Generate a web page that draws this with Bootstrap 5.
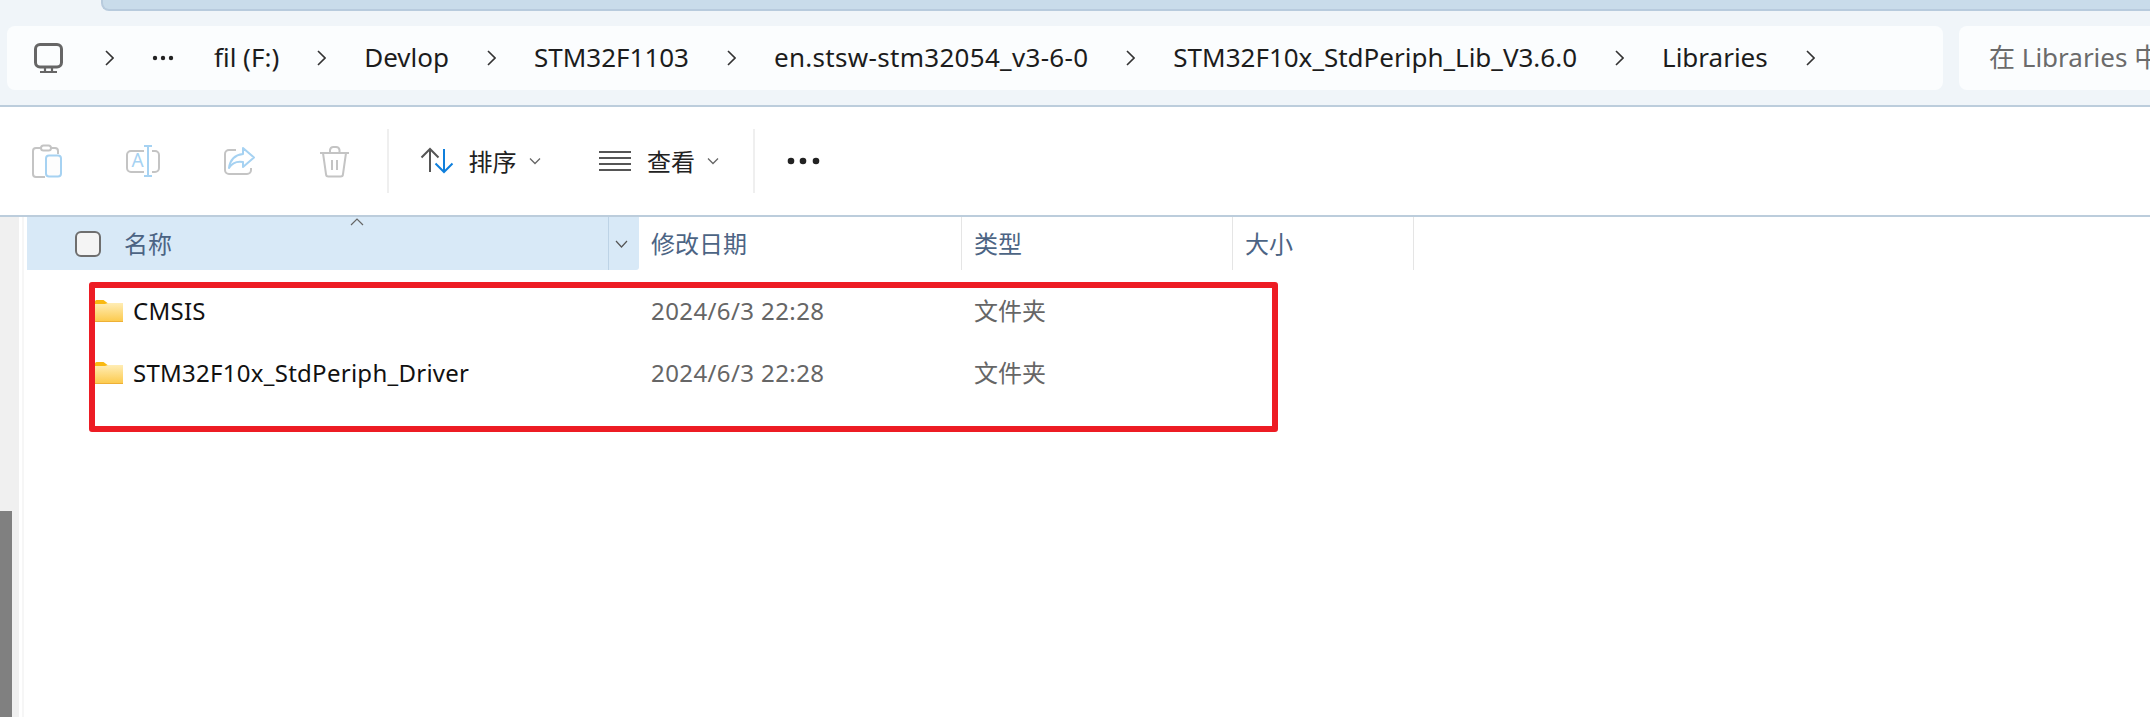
<!DOCTYPE html>
<html lang="zh">
<head>
<meta charset="utf-8">
<title>Libraries</title>
<link href="https://cdn.jsdelivr.net/npm/bootstrap@5.3.0/dist/css/bootstrap.min.css" rel="stylesheet">
<style>
html,body{height:100%;overflow:hidden;background:#fff}
body{font-family:"Noto Sans","Noto Sans CJK SC",sans-serif;font-size:24px;line-height:1.3;color:#1c1c1c}
svg{display:block;flex:none}
.ex-top{height:107px;background:#f0f5f9;border-bottom:2px solid #bccddc;position:relative}
.ex-tab{height:11px;margin-left:101px;background:#c9dcea;border-bottom:2px solid #b8cbdd;border-left:2px solid #b8cbdd;border-bottom-left-radius:8px}
.ex-bars{margin:15px 0 0 7px;height:64px;gap:16px;font-size:26px}
.ex-crumbs{width:1936px;background:#fbfdfe;border-radius:8px;padding-left:27px;gap:38px}
.ex-search{flex:1;background:#fbfdfe;border-radius:8px 0 0 8px;padding-left:30px;color:#6b6b6b;white-space:nowrap;overflow:hidden}
.ex-mon{margin-right:4px}
.ex-dots{margin-right:2px}
.ex-long{letter-spacing:.3px}
.ex-tools{height:110px;border-bottom:2px solid #bccddc}
.ex-main{height:500px}
.ex-side{width:19px;background:#f0f0f0}
.ex-thumb{width:12px;height:206px;background:#808080}
.ex-gut{width:5px;border-right:2px solid #f6f6f6;margin-right:3px}
.ex-list{flex:1;position:relative}
.ex-head{height:53px;color:#4c6484}
.ex-cname{width:581px}
.ex-cdrop{width:31px}
.ex-cdate{width:323px}
.ex-ctype{width:271px}
.ex-csize{width:181px}
.ex-hname{background:#d8e9f7;padding-left:48px;position:relative}
.ex-hdrop{background:#d8e9f7;border-left:1px solid #bdd3e6;border-radius:0 0 3px 0;padding-left:6px}
.ex-hcol{border-right:1px solid #e5e5e5;padding-left:12px}
.ex-caret{position:absolute;left:323px;top:1px}
.ex-check{width:26px;height:26px;border:2px solid #6e6e6e;border-radius:6px;background:#f4f4f4;margin-right:23px}
.ex-rows{padding-top:10px}
.ex-row{height:62px}
.ex-file{padding-left:68px;gap:10px;color:#111;letter-spacing:.27px}
.ex-meta{padding-left:12px;color:#666}
.ex-when{letter-spacing:.4px}
.ex-mark{position:absolute;left:62px;top:65px;width:1189px;height:150px;border:6px solid #ed1c24;border-radius:3px}
</style>
</head>
<body>
<svg width="0" height="0" class="position-absolute"><defs><linearGradient id="fg" x1="0" y1="0" x2="0" y2="1"><stop offset="0" stop-color="#ffedb5"/><stop offset="1" stop-color="#fcc94a"/></linearGradient></defs></svg>
<div class="ex-top">
  <div class="ex-tab"></div>
  <div class="ex-bars d-flex">
    <div class="ex-crumbs d-flex align-items-center">
      <svg class="ex-mon" width="29" height="30" viewBox="0 0 29 30"><rect x="1.5" y="1.5" width="26" height="22.5" rx="4.5" fill="none" stroke="#666" stroke-width="3"/><path d="M11 25v3M18 25v3M6 29h17" stroke="#666" stroke-width="2.2" fill="none"/></svg>
      <svg width="9" height="16" viewBox="0 0 9 16"><path d="M1 1l7 7-7 7" fill="none" stroke="#333" stroke-width="1.6"/></svg>
      <svg class="ex-dots" width="22" height="6" viewBox="0 0 22 6"><circle cx="3" cy="3" r="2.2" fill="#222"/><circle cx="11" cy="3" r="2.2" fill="#222"/><circle cx="19" cy="3" r="2.2" fill="#222"/></svg>
      <span>fil (F:)</span>
      <svg width="9" height="16" viewBox="0 0 9 16"><path d="M1 1l7 7-7 7" fill="none" stroke="#333" stroke-width="1.6"/></svg>
      <span>Devlop</span>
      <svg width="9" height="16" viewBox="0 0 9 16"><path d="M1 1l7 7-7 7" fill="none" stroke="#333" stroke-width="1.6"/></svg>
      <span>STM32F1103</span>
      <svg width="9" height="16" viewBox="0 0 9 16"><path d="M1 1l7 7-7 7" fill="none" stroke="#333" stroke-width="1.6"/></svg>
      <span class="ex-long">en.stsw-stm32054_v3-6-0</span>
      <svg width="9" height="16" viewBox="0 0 9 16"><path d="M1 1l7 7-7 7" fill="none" stroke="#333" stroke-width="1.6"/></svg>
      <span>STM32F10x_StdPeriph_Lib_V3.6.0</span>
      <svg width="9" height="16" viewBox="0 0 9 16"><path d="M1 1l7 7-7 7" fill="none" stroke="#333" stroke-width="1.6"/></svg>
      <span>Libraries</span>
      <svg width="9" height="16" viewBox="0 0 9 16"><path d="M1 1l7 7-7 7" fill="none" stroke="#333" stroke-width="1.6"/></svg>
    </div>
    <div class="ex-search d-flex align-items-center">在 Libraries 中搜索</div>
  </div>
</div>

<div class="ex-tools d-flex align-items-center">
  <svg width="2150" height="108" viewBox="0 107 2150 108">
    <path d="M42 148h-6a3 3 0 0 0-3 3v23a3 3 0 0 0 3 3h9M50 148h5a3 3 0 0 1 3 3v3" fill="none" stroke="#c4c4c4" stroke-width="2"/>
    <rect x="41" y="145.500" width="10" height="5" rx="2.500" fill="none" stroke="#c4c4c4" stroke-width="2"/>
    <rect x="46" y="155.500" width="15" height="21" rx="3" fill="#fdfdfd" stroke="#a6d2f2" stroke-width="2"/>
    <path d="M144 151h-13a4 4 0 0 0-4 4v13a4 4 0 0 0 4 4h13M152 151h3a4 4 0 0 1 4 4v13a4 4 0 0 1-4 4h-3" fill="none" stroke="#c4c4c4" stroke-width="2"/>
    <path d="M148 146v30M144 146h8M144 176h8" fill="none" stroke="#a6d2f2" stroke-width="2"/>
    <text x="131.500" y="167" font-family="Noto Sans" font-size="19" fill="#a6d2f2">A</text>
    <path d="M236 150h-7a4 4 0 0 0-4 4v16a4 4 0 0 0 4 4h18a4 4 0 0 0 4-4v-2" fill="none" stroke="#c4c4c4" stroke-width="2"/>
    <path d="M243 148l11 9.500-11 9.500v-5c-6-1-11 1-14 6 1-8 6-13 14-14z" fill="#fff" stroke="#a6d2f2" stroke-width="2" stroke-linejoin="round"/>
    <path d="M320 153h29M323 153l3 21a2.500 2.500 0 0 0 2.500 2.500h12a2.500 2.500 0 0 0 2.500-2.500l3-21M330 153v-3a3.500 3.500 0 0 1 3.500-3h2.500a3.500 3.500 0 0 1 3.500 3v3M332 160v10M337 160v10" fill="none" stroke="#c4c4c4" stroke-width="2"/>
    <rect x="387" y="129" width="2" height="64" fill="#efefef"/>
    <path d="M430 172v-23M421.500 157.500l8.500-8.500 8.500 8.500" fill="none" stroke="#555" stroke-width="2"/>
    <path d="M444 149v23M435.500 163.500l8.500 8.500 8.500-8.500" fill="none" stroke="#0f7fdc" stroke-width="2"/>
    <path d="M530 158.500l5 5 5-5" fill="none" stroke="#666" stroke-width="1.300"/>
    <path d="M599 152h32M599 158h32M599 164h32M599 170h32" fill="none" stroke="#555" stroke-width="2"/>
    <path d="M708 158.500l5 5 5-5" fill="none" stroke="#666" stroke-width="1.300"/>
    <rect x="753" y="129" width="2" height="64" fill="#efefef"/>
    <circle cx="791" cy="161" r="3.300" fill="#222"/><circle cx="803" cy="161" r="3.300" fill="#222"/><circle cx="816" cy="161" r="3.300" fill="#222"/>
    <text x="468.500" y="171" font-family="Noto Sans CJK SC" font-size="24" fill="#222">排序</text>
    <text x="647" y="171" font-family="Noto Sans CJK SC" font-size="24" fill="#222">查看</text>
  </svg>
</div>

<div class="ex-main d-flex">
  <div class="ex-side d-flex flex-column justify-content-end"><div class="ex-thumb"></div></div>
  <div class="ex-gut"></div>
  <div class="ex-list">
    <div class="ex-head d-flex">
      <div class="ex-cname ex-hname d-flex align-items-center">
        <svg class="ex-caret" width="14" height="8" viewBox="0 0 14 8"><path d="M1 7l6-6 6 6" fill="none" stroke="#666" stroke-width="1.200"/></svg>
        <span class="ex-check d-block"></span><span>名称</span>
      </div>
      <div class="ex-cdrop ex-hdrop d-flex align-items-center"><svg width="13" height="8" viewBox="0 0 13 8"><path d="M1 1l5.500 6 5.500-6" fill="none" stroke="#555" stroke-width="1.200"/></svg></div>
      <div class="ex-cdate ex-hcol d-flex align-items-center">修改日期</div>
      <div class="ex-ctype ex-hcol d-flex align-items-center">类型</div>
      <div class="ex-csize ex-hcol d-flex align-items-center">大小</div>
    </div>
    <div class="ex-rows">
      <div class="ex-row d-flex align-items-center">
        <div class="ex-cname ex-file d-flex align-items-center">
          <svg width="28" height="22" viewBox="0 0 28 22"><path d="M0 1.500a1.500 1.500 0 0 1 1.500-1.500h7l4 3h14a2 2 0 0 1 2 2v3H0z" fill="#f9b912"/><path d="M0 4h10l3-1h15v19H0z" fill="url(#fg)"/><path d="M0 21h28v1H0z" fill="#eeb036"/></svg>
          <span>CMSIS</span>
        </div>
        <div class="ex-cdrop"></div>
        <div class="ex-cdate ex-meta ex-when">2024/6/3 22:28</div>
        <div class="ex-ctype ex-meta">文件夹</div>
      </div>
      <div class="ex-row d-flex align-items-center">
        <div class="ex-cname ex-file d-flex align-items-center">
          <svg width="28" height="22" viewBox="0 0 28 22"><path d="M0 1.500a1.500 1.500 0 0 1 1.500-1.500h7l4 3h14a2 2 0 0 1 2 2v3H0z" fill="#f9b912"/><path d="M0 4h10l3-1h15v19H0z" fill="url(#fg)"/><path d="M0 21h28v1H0z" fill="#eeb036"/></svg>
          <span>STM32F10x_StdPeriph_Driver</span>
        </div>
        <div class="ex-cdrop"></div>
        <div class="ex-cdate ex-meta ex-when">2024/6/3 22:28</div>
        <div class="ex-ctype ex-meta">文件夹</div>
      </div>
    </div>
    <div class="ex-mark"></div>
  </div>
</div>
</body>
</html>
